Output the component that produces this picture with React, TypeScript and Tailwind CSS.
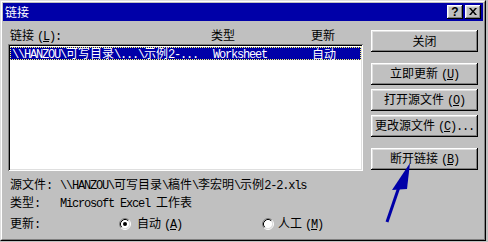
import React from "react";

const A = "font-['Liberation_Mono',monospace] text-[12px] tracking-[-1.2px]";

function Mix({ s }: { s: string }) {
  const parts = s.split(/([\x00-\x7f]+)/).filter(Boolean);
  return (
    <>
      {parts.map((p, i) =>
        /^[\x00-\x7f]+$/.test(p) ? (
          <span key={i} className={A}>
            {p}
          </span>
        ) : (
          <span key={i}>{p}</span>
        )
      )}
    </>
  );
}

function Hot({ label, k, tail = "" }: { label: string; k: string; tail?: string }) {
  return (
    <span className="whitespace-pre">
      <span>{label}</span>
      <span className={A + " ml-[3px]"}>
        (<u className="underline-offset-1">{k}</u>){tail}
      </span>
    </span>
  );
}

const bevel =
  "shadow-[inset_-1px_-1px_0_#000,inset_1px_1px_0_#fff,inset_-2px_-2px_0_#808080,inset_2px_2px_0_#dfdfdf]";

function Btn({ children, className = "" }: { children: React.ReactNode; className?: string }) {
  return (
    <div
      className={
        "h-[22px] w-[107px] bg-[#c0c0c0] flex items-center justify-center " + bevel + " " + className
      }
    >
      {children}
    </div>
  );
}

function Radio({ checked }: { checked?: boolean }) {
  return (
    <svg width="12" height="12" viewBox="0 0 12 12" className="shrink-0">
      <circle cx="6" cy="6" r="4.5" fill="#fff" />
      <path d="M2.11 9.89A5.5 5.5 0 0 1 9.89 2.11" stroke="#808080" fill="none" />
      <path d="M2.82 9.18A4.5 4.5 0 0 1 9.18 2.82" stroke="#000" fill="none" />
      <path d="M9.89 2.11A5.5 5.5 0 0 1 2.11 9.89" stroke="#fff" fill="none" />
      <path d="M9.18 2.82A4.5 4.5 0 0 1 2.82 9.18" stroke="#dfdfdf" fill="none" />
      {checked && <circle cx="6" cy="6" r="2" fill="#000" />}
    </svg>
  );
}

export default function App() {
  return (
    <div className="relative w-[488px] h-[242px] bg-[#c0c0c0] font-['Noto_Sans_CJK_SC',sans-serif] text-[12px] leading-[14px] text-black overflow-hidden">
      <div className="w-[486px] h-[241px] border-l border-t border-l-[#dfdfdf] border-t-[#dfdfdf] border-r border-b border-r-black border-b-black">
        <div className="h-full border-l border-t border-l-white border-t-white border-r border-b border-r-[#808080] border-b-[#808080] p-[1px] flex flex-col">
          {/* Title bar */}
          <div className="h-[18px] bg-[#0000a8] flex items-center justify-between pl-[2px] pr-[2px] shrink-0">
            <span className="text-white leading-[14px]">链接</span>
            <div className="flex gap-[2px]">
              <div className={"w-[16px] h-[14px] flex items-center justify-center " + bevel + " bg-[#c0c0c0]"}>
                <span className="font-['Liberation_Sans',sans-serif] font-bold text-[12px] leading-[12px] -mt-[1px]">?</span>
              </div>
              <div className={"w-[16px] h-[14px] flex items-center justify-center " + bevel + " bg-[#c0c0c0]"}>
                <svg width="8" height="7" viewBox="0 0 8 7" className="-mt-[1px]">
                  <path d="M0 0h2l2 2.5L6 0h2L5 3.5 8 7H6L4 4.5 2 7H0l3-3.5z" fill="#000" />
                </svg>
              </div>
            </div>
          </div>

          {/* Body */}
          <div className="flex pl-[5px]">
            <div className="w-[355px] flex flex-col pt-[7px]">
              <div className="flex h-[14px] whitespace-pre">
                <div className="w-[203px] pl-[2px]">
                  <Hot label="链接" k="L" tail=":" />
                </div>
                <div className="w-[100px]">类型</div>
                <div>更新</div>
              </div>
              <div className="mt-[2px] h-[127px] bg-white p-[2px] shadow-[inset_1px_1px_0_#808080,inset_-1px_-1px_0_#fff,inset_2px_2px_0_#000,inset_-2px_-2px_0_#dfdfdf]">
                <div className="mt-[1px] h-[13px] bg-[#0000a8] border border-dotted border-[#ffff60] text-white flex items-center pl-[1px] leading-[11px] whitespace-pre">
                  <div className="w-[201px]">
                    <Mix s={"\\\\HANZOU\\可写目录\\...\\示例2-..."} />
                  </div>
                  <div className="w-[99px]">
                    <Mix s="Worksheet" />
                  </div>
                  <div>自动</div>
                </div>
              </div>
              <div className="mt-[6px] h-[14px] flex whitespace-pre">
                <div className="w-[52px] pl-[2px]">
                  <Mix s="源文件:" />
                </div>
                <div>
                  <Mix s={"\\\\HANZOU\\可写目录\\稿件\\李宏明\\示例2-2.xls"} />
                </div>
              </div>
              <div className="mt-[4px] h-[14px] flex whitespace-pre">
                <div className="w-[52px] pl-[2px]">
                  <Mix s="类型:" />
                </div>
                <div>
                  <Mix s="Microsoft Excel 工作表" />
                </div>
              </div>
              <div className="mt-[8px] h-[14px] flex items-center whitespace-pre">
                <div className="w-[111px] pl-[2px]">
                  <Mix s="更新:" />
                </div>
                <div className="w-[143px] flex items-center gap-[6px]">
                  <Radio checked />
                  <Hot label="自动" k="A" />
                </div>
                <div className="flex items-center gap-[4px]">
                  <Radio />
                  <Hot label="人工" k="M" />
                </div>
              </div>
            </div>

            <div className="ml-[8px] flex flex-col pt-[9px]">
              <Btn>关闭</Btn>
              <Btn className="mt-[11px]">
                <Hot label="立即更新" k="U" />
              </Btn>
              <Btn className="mt-[4px]">
                <Hot label="打开源文件" k="O" />
              </Btn>
              <Btn className="mt-[4px]">
                <Hot label="更改源文件" k="C" tail="..." />
              </Btn>
              <Btn className="mt-[11px]">
                <Hot label="断开链接" k="B" />
              </Btn>
            </div>
          </div>
        </div>
      </div>

      {/* Annotation arrow */}
      <svg className="absolute left-0 top-0 pointer-events-none" width="488" height="242" viewBox="0 0 488 242">
        <line x1="400" y1="184" x2="387" y2="222" stroke="#0000a8" strokeWidth="3" />
        <polygon points="410,163 392,190 407,189" fill="#0000a8" />
      </svg>
    </div>
  );
}
